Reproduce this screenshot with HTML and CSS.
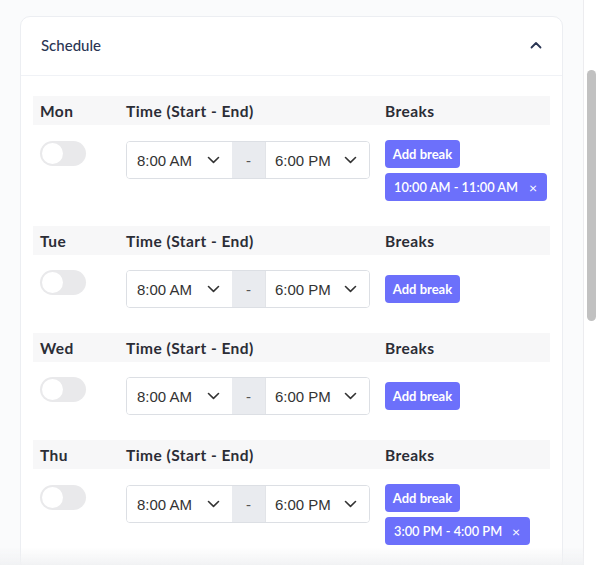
FILE: index.html
```html
<!DOCTYPE html>
<html>
<head>
<meta charset="utf-8">
<link rel="stylesheet" href="styles.css">
</head>
<body>
<div class="app">
  <div class="main">
    <div class="card">
      <div class="card-head">
        <span class="title">Schedule</span>
        <svg class="chev-up" width="12" height="8" viewBox="0 0 12 8"><path d="M1.5 6.5 L6 2 L10.5 6.5" fill="none" stroke="#2a3553" stroke-width="1.8" stroke-linecap="round" stroke-linejoin="round"/></svg>
      </div>
      <div class="card-body">

        <div class="day">
          <div class="band"><span class="c1">Mon</span><span class="c2">Time (Start - End)</span><span class="c3">Breaks</span></div>
          <div class="row top">
            <div class="c1"><div class="toggle"><span class="knob"></span></div></div>
            <div class="c2">
              <div class="timegrp">
                <div class="sel s1"><span>8:00 AM</span><svg width="13" height="8" viewBox="0 0 13 8"><path d="M1.5 1.5 L6.5 6.3 L11.5 1.5" fill="none" stroke="#333" stroke-width="1.6" stroke-linecap="round" stroke-linejoin="round"/></svg></div>
                <div class="dash">-</div>
                <div class="sel s2"><span>6:00 PM</span><svg width="13" height="8" viewBox="0 0 13 8"><path d="M1.5 1.5 L6.5 6.3 L11.5 1.5" fill="none" stroke="#333" stroke-width="1.6" stroke-linecap="round" stroke-linejoin="round"/></svg></div>
              </div>
            </div>
            <div class="c3 breaks">
              <button class="btn">Add break</button>
              <div class="tag wide"><span>10:00 AM - 11:00 AM</span><span class="x">×</span></div>
            </div>
          </div>
        </div>

        <div class="day">
          <div class="band"><span class="c1">Tue</span><span class="c2">Time (Start - End)</span><span class="c3">Breaks</span></div>
          <div class="row mid">
            <div class="c1"><div class="toggle"><span class="knob"></span></div></div>
            <div class="c2">
              <div class="timegrp">
                <div class="sel s1"><span>8:00 AM</span><svg width="13" height="8" viewBox="0 0 13 8"><path d="M1.5 1.5 L6.5 6.3 L11.5 1.5" fill="none" stroke="#333" stroke-width="1.6" stroke-linecap="round" stroke-linejoin="round"/></svg></div>
                <div class="dash">-</div>
                <div class="sel s2"><span>6:00 PM</span><svg width="13" height="8" viewBox="0 0 13 8"><path d="M1.5 1.5 L6.5 6.3 L11.5 1.5" fill="none" stroke="#333" stroke-width="1.6" stroke-linecap="round" stroke-linejoin="round"/></svg></div>
              </div>
            </div>
            <div class="c3 breaks">
              <button class="btn">Add break</button>
            </div>
          </div>
        </div>

        <div class="day">
          <div class="band"><span class="c1">Wed</span><span class="c2">Time (Start - End)</span><span class="c3">Breaks</span></div>
          <div class="row mid">
            <div class="c1"><div class="toggle"><span class="knob"></span></div></div>
            <div class="c2">
              <div class="timegrp">
                <div class="sel s1"><span>8:00 AM</span><svg width="13" height="8" viewBox="0 0 13 8"><path d="M1.5 1.5 L6.5 6.3 L11.5 1.5" fill="none" stroke="#333" stroke-width="1.6" stroke-linecap="round" stroke-linejoin="round"/></svg></div>
                <div class="dash">-</div>
                <div class="sel s2"><span>6:00 PM</span><svg width="13" height="8" viewBox="0 0 13 8"><path d="M1.5 1.5 L6.5 6.3 L11.5 1.5" fill="none" stroke="#333" stroke-width="1.6" stroke-linecap="round" stroke-linejoin="round"/></svg></div>
              </div>
            </div>
            <div class="c3 breaks">
              <button class="btn">Add break</button>
            </div>
          </div>
        </div>

        <div class="day">
          <div class="band"><span class="c1">Thu</span><span class="c2">Time (Start - End)</span><span class="c3">Breaks</span></div>
          <div class="row top">
            <div class="c1"><div class="toggle"><span class="knob"></span></div></div>
            <div class="c2">
              <div class="timegrp">
                <div class="sel s1"><span>8:00 AM</span><svg width="13" height="8" viewBox="0 0 13 8"><path d="M1.5 1.5 L6.5 6.3 L11.5 1.5" fill="none" stroke="#333" stroke-width="1.6" stroke-linecap="round" stroke-linejoin="round"/></svg></div>
                <div class="dash">-</div>
                <div class="sel s2"><span>6:00 PM</span><svg width="13" height="8" viewBox="0 0 13 8"><path d="M1.5 1.5 L6.5 6.3 L11.5 1.5" fill="none" stroke="#333" stroke-width="1.6" stroke-linecap="round" stroke-linejoin="round"/></svg></div>
              </div>
            </div>
            <div class="c3 breaks">
              <button class="btn">Add break</button>
              <div class="tag narrow"><span>3:00 PM - 4:00 PM</span><span class="x">×</span></div>
            </div>
          </div>
        </div>

      </div>
    </div>
  </div>
  <div class="scrollbar"><div class="thumb"></div></div>
</div>
<div class="fade"></div>
</body>
</html>
```
FILE: styles.css
```css
html, body {
  margin: 0;
  padding: 0;
  height: 565px;
  overflow: hidden;
  background: #fafbfc;
  font-family: Lato, "Open Sans", sans-serif;
}
.app {
  display: flex;
  height: 565px;
}
.main {
  width: 584px;
  border-right: 1px solid #ececef;
  padding: 16px 0 0 20px;
  box-sizing: border-box;
}
.card {
  width: 543px;
  box-sizing: border-box;
  background: #fff;
  border: 1px solid #eceef2;
  border-radius: 10px;
}
.card-head {
  height: 58px;
  display: flex;
  align-items: center;
  justify-content: space-between;
  padding: 0 20px 0 20px;
  border-bottom: 1px solid #f0f2f6;
}
.title {
  font-size: 15px;
  color: #2a3553;
  font-weight: 500;
  margin-top: -2px;
}
.chev-up { margin-top: -3px; }
.card-body {
  padding: 20px 12px 0 12px;
}
.day { margin-bottom: 25px; }
.band {
  display: flex;
  height: 29px;
  align-items: center;
  background: #f7f7f8;
  font-weight: 700;
  font-size: 15.5px;
  color: #2b2d36;
  letter-spacing: 0.45px;
}
.c1 { width: 93px; padding-left: 7px; box-sizing: border-box; flex: none; }
.c2 { width: 259px; flex: none; }
.c3 { flex: 1; }
.row {
  display: flex;
  padding-top: 15px;
}
.row.top { align-items: flex-start; }
.row.top .c2 { padding-top: 1px; }
.row.top .c1 { padding-top: 1px; }
.row.mid { align-items: center; }
.row.mid .c1 { align-self: flex-start; }
.toggle {
  width: 46px;
  height: 25px;
  border-radius: 13px;
  background: #e9e9eb;
  display: flex;
  align-items: center;
  padding-left: 2px;
  box-sizing: border-box;
}
.knob {
  width: 21px;
  height: 21px;
  border-radius: 50%;
  background: #fff;
}
.timegrp {
  display: flex;
  width: 244px;
  height: 38px;
  border: 1px solid #dcdfe4;
  border-radius: 4px;
  box-sizing: border-box;
  overflow: hidden;
  font-family: "Liberation Sans", Arial, sans-serif;
  font-size: 15px;
  color: #333;
}
.sel {
  display: flex;
  align-items: center;
  justify-content: space-between;
  background: #fff;
  box-sizing: border-box;
}
.s1 { width: 105px; padding: 0 12px 0 10px; }
.s2 { flex: 1; padding: 0 12px 0 9px; }
.dash {
  width: 33px;
  background: #e9ebef;
  display: flex;
  align-items: center;
  justify-content: center;
  color: #555;
  border-right: 1px solid #e2e4e8;
}
.breaks {
  display: flex;
  flex-direction: column;
  align-items: flex-start;
  gap: 5px;
}
.btn {
  height: 28px;
  width: 75px;
  padding: 0;
  border: none;
  border-radius: 4px;
  background: #6c70fb;
  color: #fff;
  font-family: Lato, "Open Sans", sans-serif;
  font-size: 13px;
  font-weight: 700;
}
.tag {
  height: 28px;
  display: flex;
  align-items: center;
  justify-content: space-between;
  padding: 0 10px 0 9px;
  box-sizing: border-box;
  background: #6c70fb;
  color: #fff;
  border-radius: 4px;
  font-size: 12.8px;
  font-weight: 700;
}
.tag span:first-child { font-weight: 600; }
.tag.wide { width: 162px; }
.tag.narrow { width: 145px; }
.x { font-size: 14px; font-weight: 400; }
.scrollbar {
  flex: 1;
  background: #fff;
  padding: 70px 2px 0 3px;
}
.thumb {
  width: 9px;
  height: 251px;
  border-radius: 5px;
  background: #c1c1c1;
}
.fade {
  position: fixed;
  left: 0;
  right: 14px;
  bottom: 0;
  height: 18px;
  background: linear-gradient(to bottom, rgba(240,241,243,0), rgba(240,241,243,0.9));
}
```
